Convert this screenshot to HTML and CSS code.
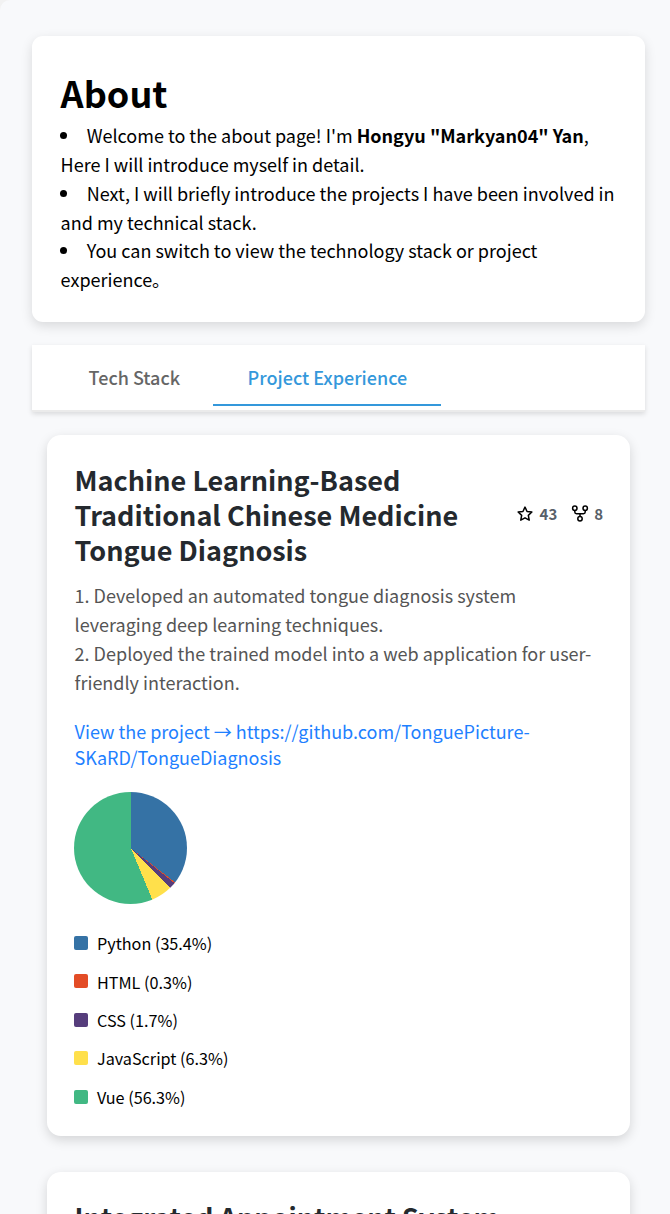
FILE: index.html
```
<!DOCTYPE html>
<html lang="en">
<head>
<meta charset="utf-8">
<title>About</title>
<link rel="stylesheet" href="styles.css">
</head>
<body>
<main class="page">
  <section class="about">
    <h1 class="about-title">About</h1>
    <ul class="about-list">
      <li>Welcome to the about page! I'm <strong>Hongyu "Markyan04" Yan</strong>,<br>Here I will introduce myself in detail.</li>
      <li>Next, I will briefly introduce the projects I have been involved in<br>and my technical stack.</li>
      <li>You can switch to view the technology stack or project<br>experience。</li>
    </ul>
  </section>
  <nav class="tabs">
    <a class="tab tab-first">Tech Stack</a>
    <a class="tab tab-active">Project Experience</a>
  </nav>
  <article class="card">
    <header class="card-head">
      <h2 class="card-title">Machine Learning-Based<br>Traditional Chinese Medicine<br>Tongue Diagnosis</h2>
      <div class="stats">
        <span class="stat"><svg class="icon" viewBox="0 0 18 18"><path d="M9 2.1l2.05 4.35 4.8.62-3.52 3.3.9 4.73L9 12.8l-4.23 2.3.9-4.73-3.52-3.3 4.8-.62z"/></svg>43</span>
        <span class="stat"><svg class="icon" viewBox="0 0 18 18"><circle cx="3.8" cy="3.2" r="2.2"/><circle cx="14.2" cy="3.2" r="2.2"/><circle cx="9" cy="13.8" r="2.2"/><path d="M3.8 5.4v1.6q0 1.7 1.7 1.7h7q1.7 0 1.7-1.7V5.4M9 8.7v3"/></svg>8</span>
      </div>
    </header>
    <p class="desc">1. Developed an automated tongue diagnosis system<br>leveraging deep learning techniques.<br>2. Deployed the trained model into a web application for user-<br>friendly interaction.</p>
    <a class="link">View the project → https://github.com/TonguePicture-<br>SKaRD/TongueDiagnosis</a>
    <div class="pie"></div>
    <ul class="legend">
      <li><i class="swatch python"></i>Python (35.4%)</li>
      <li><i class="swatch html"></i>HTML (0.3%)</li>
      <li><i class="swatch css"></i>CSS (1.7%)</li>
      <li><i class="swatch js"></i>JavaScript (6.3%)</li>
      <li><i class="swatch vue"></i>Vue (56.3%)</li>
    </ul>
  </article>
  <article class="card card-next">
    <h2 class="card-title">Integrated Appointment System</h2>
  </article>
</main>
</body>
</html>
```
FILE: styles.css
```
* { box-sizing: border-box; }
html { background: #f2f2f2; }
body {
  margin: 0;
  height: 1214px;
  overflow: hidden;
  font-family: "Noto Sans CJK SC", sans-serif;
  color: #000;
}
h1, h2, p, ul { margin: 0; padding: 0; }
ul { list-style: none; }
.page {
  height: 1214px;
  padding: 36px 25px 0 32px;
  overflow: hidden;
  background: #f8f9fb;
  border-radius: 10px 0 0 0;
}
.about {
  height: 286px;
  padding: 28px 28.8px 0 28.6px;
  background: #fff;
  border-radius: 11px;
  box-shadow: 0 4px 12px rgba(0, 0, 0, .13);
}
.about-title { height: 57.2px; font-size: 36px; line-height: 57px; font-weight: 700; }
.about-list { font-size: 18px; line-height: 28.8px; white-space: nowrap; }
.about-list li::before {
  content: "";
  display: inline-block;
  width: 7px;
  height: 7px;
  margin: 0 19.7px 4px -.6px;
  border-radius: 50%;
  background: #000;
}
.tabs {
  display: flex;
  height: 67px;
  margin-top: 23px;
  padding-left: 22px;
  background: #fff;
  border-bottom: 2px solid #ebebeb;
  box-shadow: 0 2px 5px rgba(0, 0, 0, .13);
  font-size: 18px;
  font-weight: 500;
  line-height: 64px;
}
.tab { height: 61px; padding: 0 34.6px; white-space: nowrap; color: #666; }
.tab-first { width: 159px; }
.tab-active { width: 228px; color: #3498db; border-bottom: 2px solid #3498db; }
.card {
  height: 701px;
  margin: 23px 15px 36px;
  padding: 27px 27px 0 27.6px;
  background: #fff;
  border-radius: 14px;
  box-shadow: 0 4px 12px rgba(0, 0, 0, .15);
}
.card-head { display: flex; justify-content: space-between; }
.card-title {
  font-size: 27px;
  line-height: 35px;
  font-weight: 700;
  color: #24292e;
  white-space: nowrap;
}
.stats { display: flex; gap: 13.6px; height: 24px; margin-top: 40px; }
.stat {
  display: flex;
  align-items: center;
  gap: 5.3px;
  font-size: 15px;
  line-height: 24px;
  font-weight: 700;
  color: #586069;
}
.icon { width: 18px; height: 18px; fill: none; stroke: #000; stroke-width: 1.5; stroke-linejoin: round; }
.desc { margin-top: 14px; font-size: 18px; line-height: 29px; color: #555; white-space: nowrap; }
.link { display: block; margin-top: 21px; font-size: 18px; line-height: 26px; color: #1e80ff; white-space: nowrap; }
.pie {
  width: 113px;
  height: 112px;
  margin: 22px 0 0 -.6px;
  border-radius: 50%;
  background: conic-gradient(at 57px 56.5px, #3572a5 0 35.4%, #e34c26 35.4% 35.7%, #563d7c 35.7% 37.4%, #ffe04b 37.4% 43.7%, #41b883 43.7%);
}
.legend { margin: 20.3px 0 0 -.6px; font-size: 16.2px; line-height: 38.4px; }
.legend li { display: flex; align-items: center; height: 38.4px; }
.swatch { width: 14px; height: 14px; margin: 0 9px .8px 0; border-radius: 2px; }
.python { background: #3572a5; }
.html { background: #e34c26; }
.css { background: #563d7c; }
.js { background: #ffe04b; }
.vue { background: #41b883; }
.card-next { margin-bottom: 0; padding-top: 27px; }
```
